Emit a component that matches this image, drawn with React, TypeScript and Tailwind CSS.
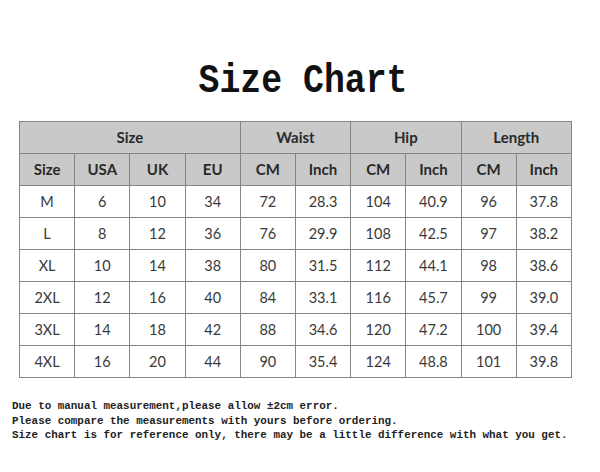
import React from "react";

const rows = [
  ["M", "6", "10", "34", "72", "28.3", "104", "40.9", "96", "37.8"],
  ["L", "8", "12", "36", "76", "29.9", "108", "42.5", "97", "38.2"],
  ["XL", "10", "14", "38", "80", "31.5", "112", "44.1", "98", "38.6"],
  ["2XL", "12", "16", "40", "84", "33.1", "116", "45.7", "99", "39.0"],
  ["3XL", "14", "18", "42", "88", "34.6", "120", "47.2", "100", "39.4"],
  ["4XL", "16", "20", "44", "90", "35.4", "124", "48.8", "101", "39.8"],
];

const sub = ["Size", "USA", "UK", "EU", "CM", "Inch", "CM", "Inch", "CM", "Inch"];

export default function App() {
  return (
    <div className="w-[600px] h-[472px] bg-white flex flex-col overflow-hidden">
      <div className="mt-[62px] h-[40px] flex justify-center">
        <div
          className="text-[40px] leading-[40px] font-bold text-[#111] scale-x-[0.87] whitespace-pre translate-x-[3px]"
          style={{ fontFamily: '"Liberation Mono", monospace' }}
        >
          Size Chart
        </div>
      </div>
      <div className="mt-[19px] pl-[19px]">
        <table
          className="w-[553px] table-fixed border-collapse text-center"
          style={{ fontFamily: "Lato, sans-serif" }}
        >
          <tbody>
            <tr className="h-[32px] bg-[#c9c9c9] text-[#2a2a2a] text-[15px] font-bold">
              <td colSpan={4} className="border border-[#858585] p-0">Size</td>
              <td colSpan={2} className="border border-[#858585] p-0">Waist</td>
              <td colSpan={2} className="border border-[#858585] p-0">Hip</td>
              <td colSpan={2} className="border border-[#858585] p-0">Length</td>
            </tr>
            <tr className="h-[32px] bg-[#c9c9c9] text-[#2a2a2a] text-[15px] font-bold">
              {sub.map((s, i) => (
                <td key={i} className="border border-[#858585] p-0">{s}</td>
              ))}
            </tr>
            {rows.map((r, ri) => (
              <tr key={ri} className="h-[32px] bg-white text-[#3a3a3a] text-[14.5px]">
                {r.map((c, ci) => (
                  <td key={ci} className="border border-[#858585] p-0">{c}</td>
                ))}
              </tr>
            ))}
          </tbody>
        </table>
      </div>
      <div
        className="mt-[21px] pl-[12px] text-[10.9px] leading-[14.5px] font-bold text-[#222] whitespace-pre"
        style={{ fontFamily: '"Liberation Mono", monospace' }}
      >
        <div>Due to manual measurement,please allow ±2cm error.</div>
        <div>Please compare the measurements with yours before ordering.</div>
        <div>Size chart is for reference only, there may be a little difference with what you get.</div>
      </div>
    </div>
  );
}
